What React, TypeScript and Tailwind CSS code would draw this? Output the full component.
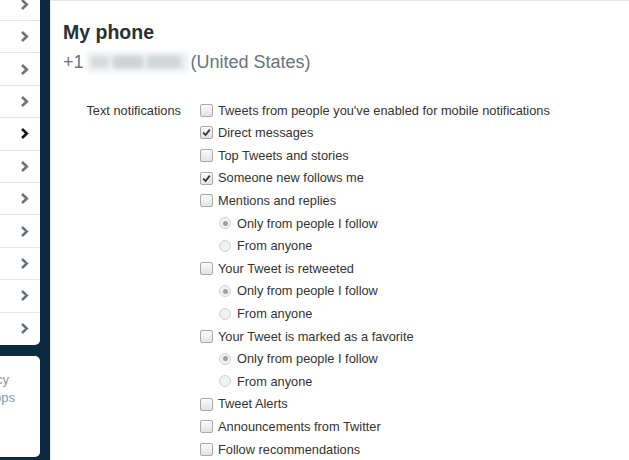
type Row =
  | { kind: "check"; label: string; on?: boolean }
  | { kind: "radio"; label: string; on?: boolean };

const rows: Row[] = [
  { kind: "check", label: "Tweets from people you've enabled for mobile notifications" },
  { kind: "check", label: "Direct messages", on: true },
  { kind: "check", label: "Top Tweets and stories" },
  { kind: "check", label: "Someone new follows me", on: true },
  { kind: "check", label: "Mentions and replies" },
  { kind: "radio", label: "Only from people I follow", on: true },
  { kind: "radio", label: "From anyone" },
  { kind: "check", label: "Your Tweet is retweeted" },
  { kind: "radio", label: "Only from people I follow", on: true },
  { kind: "radio", label: "From anyone" },
  { kind: "check", label: "Your Tweet is marked as a favorite" },
  { kind: "radio", label: "Only from people I follow", on: true },
  { kind: "radio", label: "From anyone" },
  { kind: "check", label: "Tweet Alerts" },
  { kind: "check", label: "Announcements from Twitter" },
  { kind: "check", label: "Follow recommendations" },
];

function Chevron({ active }: { active?: boolean }) {
  return (
    <svg width="9" height="13" viewBox="0 0 9 13" className={active ? "text-[#14171a]" : "text-[#66757f]"}>
      <path d="M2 2 L6.8 6.5 L2 11" fill="none" stroke="currentColor" strokeWidth="2.6" />
    </svg>
  );
}

function Checkbox({ on }: { on?: boolean }) {
  return (
    <span className="flex h-[13px] w-[13px] shrink-0 items-center justify-center rounded-[2px] border border-[#a9a9a9] bg-gradient-to-b from-[#fafafa] to-[#e3e3e3]">
      {on && (
        <svg width="9" height="9" viewBox="0 0 9 9">
          <path d="M1.2 4.6 L3.6 7 L7.8 1.6" fill="none" stroke="#333" strokeWidth="1.8" />
        </svg>
      )}
    </span>
  );
}

function Radio({ on }: { on?: boolean }) {
  return (
    <span className="flex h-[12px] w-[12px] shrink-0 items-center justify-center rounded-full border border-[#d2d2d2] bg-[#f1f1f1]">
      {on && <span className="h-[5px] w-[5px] rounded-full bg-[#a0a0a0]" />}
    </span>
  );
}

export default function App() {
  return (
    <div className="flex h-[460px] w-[629px] overflow-hidden bg-[#0d2b40] font-['Liberation_Sans',Arial,sans-serif]">
      {/* left nav, cut off */}
      <div className="w-[40px] shrink-0">
        <div className="mt-[-11.4px] overflow-hidden rounded-br-[5px] bg-white">
          {Array.from({ length: 11 }).map((_, i) => (
            <div
              key={i}
              className={`flex h-[32.4px] items-center pl-[20px] ${i < 10 ? "border-b border-[#e1e8ed]" : ""}`}
            >
              <Chevron active={i === 4} />
            </div>
          ))}
        </div>
        <div className="mt-[11px] h-[101px] overflow-hidden rounded-r-[5px] bg-white pt-[15px] text-[13px] leading-[18px] text-[#8899a6]">
          <div className="flex justify-end pr-[31px]">
            <span className="shrink-0 whitespace-nowrap">Terms Privacy</span>
          </div>
          <div className="flex justify-end pr-[25px]">
            <span className="shrink-0 whitespace-nowrap">Status Apps</span>
          </div>
        </div>
      </div>

      {/* main panel */}
      <div className="ml-[10px] flex-1 border-l border-t border-[#e1e8ed] bg-white pl-[12px] pt-[19px]">
        <h1 className="text-[19.5px] font-bold leading-[24px] text-[#292f33]">My phone</h1>
        <div className="mt-[6px] flex items-center text-[18px] leading-[24px] text-[#66757f]">
          <span>+1</span>
          <span className="mx-[3px] flex h-[20px] w-[101px] items-center gap-[4px] rounded-[3px] bg-[#eceef0] px-[4px] blur-[2px]">
            <span className="h-[10px] w-[18px] rounded bg-[#d6d9dc]" />
            <span className="h-[12px] w-[30px] rounded bg-[#cfd3d6]" />
            <span className="h-[12px] w-[34px] rounded bg-[#d3d6d9]" />
          </span>
          <span>(United States)</span>
        </div>

        <div className="mt-[25px] flex text-[12.8px] text-[#333]">
          <div className="flex h-[22.6px] w-[118px] shrink-0 items-center justify-end">Text notifications</div>
          <div className="ml-[19px] flex flex-col">
            {rows.map((r, i) => (
              <div
                key={i}
                className={`flex h-[22.6px] items-center whitespace-nowrap ${r.kind === "radio" ? "gap-[6px] pl-[19px]" : "gap-[5px]"}`}
              >
                {r.kind === "check" ? <Checkbox on={r.on} /> : <Radio on={r.on} />}
                <span>{r.label}</span>
              </div>
            ))}
          </div>
        </div>
      </div>
    </div>
  );
}
